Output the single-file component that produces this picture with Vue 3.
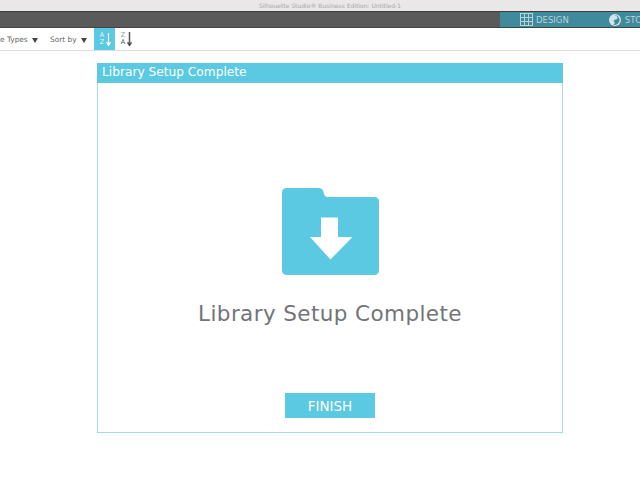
<script setup>
</script>

<template>
  <div class="page">
    <header class="titlebar"><span class="title">Silhouette Studio® Business Edition: Untitled-1</span></header>
    <nav class="darkbar">
      <div class="tabs">
        <div class="tab design">
          <svg width="13" height="13" viewBox="0 0 13 13" fill="none" stroke="#b5d3db" stroke-width="1">
            <rect x="0.5" y="0.5" width="12" height="12" />
            <path d="M4.500 .5v12M8.500 .5v12M.5 4.500h12M.5 8.500h12" />
          </svg>
          <span>DESIGN</span>
        </div>
        <div class="tab store">
          <svg width="12" height="12" viewBox="0 0 12 12">
            <circle cx="6" cy="6" r="6" fill="#d3e4e8" />
            <path d="M5 1.500C8 1.500 9.500 3.500 8 5 6.500 6 4 5.500 5 7.500 6 9 6 10 4 11 7 11.500 11 9 10.500 5.500 10 2.500 7.500 .5 5 1.500Z" fill="#3f8a9b" />
          </svg>
          <span>STORE</span>
        </div>
      </div>
    </nav>
    <div class="toolbar">
      <span class="filter types">e Types <i class="caret"></i></span>
      <span class="filter sort">Sort by <i class="caret"></i></span>
      <button class="sortbtn active">
        <span class="letters"><b>A</b><b>Z</b></span>
        <svg width="5" height="14" viewBox="0 0 5 14"><path d="M2.500 1v12M.5 10l2 3.500 2-3.500" fill="none" stroke="#fff" stroke-width="1.200" /></svg>
      </button>
      <button class="sortbtn">
        <span class="letters dark"><b class="light">Z</b><b>A</b></span>
        <svg width="5" height="14" viewBox="0 0 5 14"><path d="M2.500 0v13M.5 10.500l2 3 2-3" fill="none" stroke="#555" stroke-width="1.500" /></svg>
      </button>
    </div>
    <main class="content">
      <section class="dialog">
        <h2 class="dialog-head">Library Setup Complete</h2>
        <div class="dialog-body">
          <svg class="folder" width="97" height="87" viewBox="0 0 97 87">
            <path d="M5 0H36Q41 0 41.500 4 42 9 46 9H92Q97 9 97 14V82Q97 87 92 87H5Q0 87 0 82V5Q0 0 5 0Z" fill="#5bc9e1" />
            <path d="M39 29.500H56V49H70.500L48.500 71.500 28 49H39Z" fill="#fff" />
          </svg>
          <p class="message">Library Setup Complete</p>
          <button class="finish">FINISH</button>
        </div>
      </section>
    </main>
  </div>
</template>

<style>
body { margin: 0; background: #fff; overflow: hidden; }
</style>

<style scoped>
.page {
  width: 640px;
  height: 477px;
  overflow: hidden;
  font-family: "DejaVu Sans", sans-serif;
  background: #fff;
}
.titlebar {
  height: 11px;
  background: #e9e7e7;
  display: flex;
  justify-content: center;
  align-items: center;
  padding-left: 20px;
}
.title {
  font-size: 6px;
  color: #a8a8a8;
  line-height: 6px;
  white-space: nowrap;
}
.darkbar {
  height: 15px;
  background: #5a5a5a;
  border-top: 1px solid #3f3f3f;
  border-bottom: 1px solid #444;
  display: flex;
  justify-content: flex-end;
}
.tabs {
  width: 140px;
  background: #3f8a9b;
  display: flex;
  align-items: center;
  overflow: hidden;
  padding-left: 20px;
  box-sizing: border-box;
}
.tab {
  display: flex;
  align-items: center;
  font-size: 8.500px;
  color: #b5d3db;
  white-space: nowrap;
  flex: none;
}
.tab span { margin-left: 3px; }
.tab.store { margin-left: 40px; }
.tab.store span { margin-left: 4px; }
.toolbar {
  height: 22px;
  border-bottom: 1px solid #ddd;
  display: flex;
  align-items: stretch;
  font-size: 7.400px;
  color: #666;
  position: relative;
}
.filter {
  display: flex;
  align-items: center;
  white-space: nowrap;
}
.types { width: 50px; }
.sort { width: 44px; }
.caret {
  display: inline-block;
  width: 0;
  height: 0;
  border-left: 3px solid transparent;
  border-right: 3px solid transparent;
  border-top: 5px solid #444;
  margin-left: 4px;
  margin-top: 2px;
}
.sortbtn {
  width: 21px;
  padding: 0 0 0 4px;
  margin: 0;
  border: 0;
  background: transparent;
  display: flex;
  align-items: center;
  gap: 0;
  font-family: inherit;
}
.sortbtn.active { background: #5bc9e1; }
.letters {
  display: flex;
  flex-direction: column;
  font-size: 6.500px;
  line-height: 7px;
  color: #e8f8fb;
  width: 8px;
  align-items: center;
}
.letters b { font-weight: 400; }
.letters.dark { color: #555; }
.letters .light { color: #999; }
.content {
  display: flex;
  justify-content: center;
  padding: 12px 0 0 20px;
}
.dialog {
  width: 466px;
  height: 370px;
  box-sizing: border-box;
  border: 1px solid #9adfe6;
  border-top: 0;
  display: flex;
  flex-direction: column;
}
.dialog-head {
  margin: 0 -1px;
  height: 20px;
  background: #5bc9e1;
  color: #fff;
  font-size: 12.200px;
  font-weight: 400;
  line-height: 18px;
  padding-left: 5px;
}
.dialog-body {
  flex: 1;
  display: flex;
  flex-direction: column;
  align-items: center;
}
.folder { margin-top: 105px; }
.message {
  margin: 23px 0 0;
  font-size: 21.500px;
  line-height: 32px;
  color: #737477;
  letter-spacing: 0.400px;
  white-space: nowrap;
}
.finish {
  margin-top: 63px;
  width: 90px;
  height: 25px;
  border: 0;
  padding: 0;
  background: #5bc9e1;
  color: #fff;
  font-family: inherit;
  font-size: 13.500px;
}
</style>
